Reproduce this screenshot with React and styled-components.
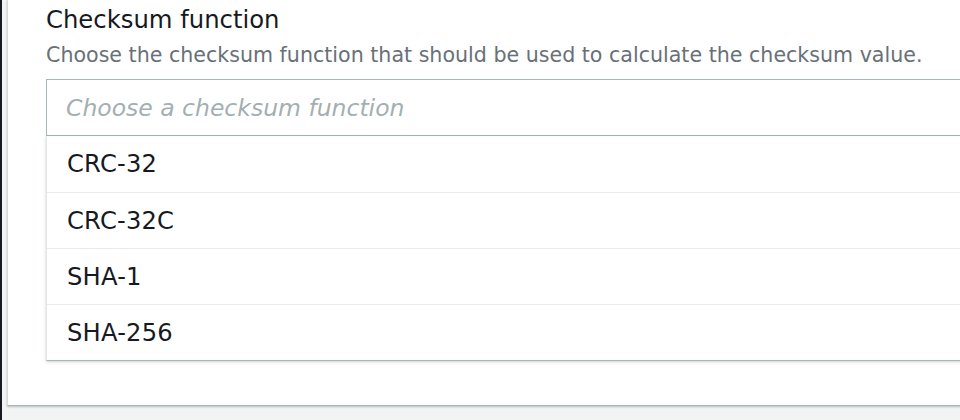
import React from "react";
import styled, { createGlobalStyle } from "styled-components";

const Global = createGlobalStyle`
  html, body { margin: 0; padding: 0; }
  body {
    background: #f2f3f3;
    font-family: "DejaVu Sans", "Noto Sans", sans-serif;
    width: 960px;
    height: 420px;
    overflow: hidden;
  }
`;

const Frame = styled.div`
  height: 420px;
  border-left: 2px solid #16191f;
  padding-left: 5px;
  box-sizing: border-box;
  overflow: hidden;
`;

const Card = styled.section`
  width: 1000px;
  height: 406px;
  background: #ffffff;
  border-left: 1px solid #d5dbdb;
  border-bottom: 1px solid #aab7b8;
  box-shadow: 0 1px 2px rgba(0, 28, 36, 0.25);
  box-sizing: border-box;
  padding: 6px 0 0 38px;
  display: flex;
  flex-direction: column;
`;

const Label = styled.h2`
  margin: 0;
  font-size: 24.3px;
  font-weight: 400;
  color: #16191f;
  line-height: 28px;
`;

const Description = styled.p`
  margin: 8px 0 0;
  font-size: 20.6px;
  color: #687078;
  line-height: 26px;
  white-space: nowrap;
`;

const Select = styled.div`
  margin-top: 11px;
  height: 57px;
  border: 1px solid #aab7b8;
  border-right: none;
  box-sizing: border-box;
  display: flex;
  align-items: center;
  padding-left: 19px;
`;

const Placeholder = styled.span`
  font-size: 23.5px;
  font-style: italic;
  color: #a3afb0;
`;

const List = styled.ul`
  margin: 0;
  padding: 0;
  list-style: none;
  border-left: 1px solid #e4e8e8;
  border-bottom: 1px solid #aab7b8;
  box-shadow: 0 1px 3px 0 rgba(0, 28, 36, 0.2);
`;

const Option = styled.li`
  height: 56px;
  display: flex;
  align-items: center;
  padding-left: 20px;
  font-size: 24.2px;
  letter-spacing: 0.2px;
  color: #16191f;
  border-top: ${(p) => (p.first ? "none" : "1px solid #e6eaea")};
  box-sizing: border-box;
`;

const options = ["CRC-32", "CRC-32C", "SHA-1", "SHA-256"];

export default function App() {
  return (
    <>
      <Global />
      <Frame>
        <Card>
          <Label>Checksum function</Label>
          <Description>
            Choose the checksum function that should be used to calculate the checksum value.
          </Description>
          <Select>
            <Placeholder>Choose a checksum function</Placeholder>
          </Select>
          <List>
            {options.map((o, i) => (
              <Option key={o} first={i === 0}>
                {o}
              </Option>
            ))}
          </List>
        </Card>
      </Frame>
    </>
  );
}
